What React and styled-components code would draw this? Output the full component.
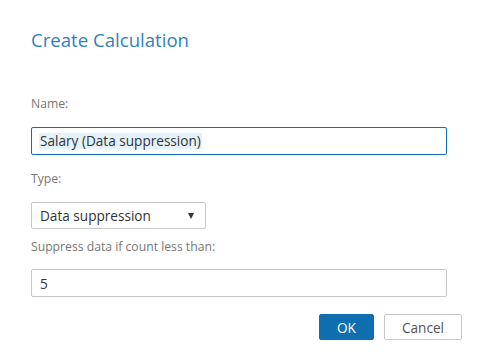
import React from 'react';
import styled, { createGlobalStyle } from 'styled-components';

const GlobalStyle = createGlobalStyle`
  html, body {
    margin: 0;
    padding: 0;
    background: #ffffff;
  }
  body {
    font-family: 'Open Sans', 'Liberation Sans', sans-serif;
  }
`;

const Dialog = styled.div`
  width: 479px;
  height: 358px;
  box-sizing: border-box;
  padding: 28px 0 0 31px;
  display: flex;
  flex-direction: column;
`;

const Title = styled.h1`
  margin: 0;
  font-size: 18.6px;
  line-height: 24px;
  font-weight: 400;
  color: #2f80c2;
`;

const Form = styled.div`
  display: flex;
  flex-direction: column;
  width: 416px;
  margin-top: 44px;
`;

const Label = styled.label`
  font-size: 12.2px;
  line-height: 16px;
  color: #777;
  margin-top: ${p => p.$top || 0}px;
`;

const TextInput = styled.div`
  box-sizing: border-box;
  height: 28px;
  margin-top: ${p => p.$top || 0}px;
  border: 1px solid ${p => (p.$focused ? '#0f6fb4' : '#c8c8c8')};
  border-radius: 2px;
  padding: 0 8px;
  display: flex;
  align-items: center;
  font-size: 13.6px;
  color: #333;
`;

const Selected = styled.span`
  background: #e3f2fb;
  padding: 0 1px;
  margin-left: -1px;
  line-height: 16px;
`;

const Select = styled.div`
  box-sizing: border-box;
  width: 175px;
  height: 27px;
  margin-top: 15px;
  border: 1px solid #c8c8c8;
  border-radius: 2px;
  padding: 0 11px 0 8px;
  display: flex;
  align-items: center;
  justify-content: space-between;
  font-size: 13.6px;
  color: #333;
`;

const Caret = styled.span`
  width: 0;
  height: 0;
  border-left: 3.5px solid transparent;
  border-right: 3.5px solid transparent;
  border-top: 6px solid #333;
`;

const Actions = styled.div`
  display: flex;
  justify-content: flex-end;
  gap: 10px;
  margin-top: 17px;
  padding-right: 17px;
`;

const Button = styled.button`
  box-sizing: border-box;
  height: 26px;
  padding: 0;
  width: ${p => p.$w}px;
  border-radius: 2px;
  font-family: inherit;
  font-size: 13.6px;
  cursor: pointer;
  border: 1px solid ${p => (p.$primary ? '#0e6eb0' : '#c8c8c8')};
  background: ${p => (p.$primary ? '#0e6eb0' : '#fff')};
  color: ${p => (p.$primary ? '#fff' : '#555')};
`;

export default function App() {
  return (
    <>
      <GlobalStyle />
      <Dialog>
        <Title>Create Calculation</Title>
        <Form>
          <Label>Name:</Label>
          <TextInput $focused $top={15}>
            <Selected>Salary (Data suppression)</Selected>
          </TextInput>
          <Label $top={16}>Type:</Label>
          <Select>
            <span>Data suppression</span>
            <Caret />
          </Select>
          <Label $top={10}>Suppress data if count less than:</Label>
          <TextInput $top={14}>5</TextInput>
        </Form>
        <Actions>
          <Button $primary $w={55}>OK</Button>
          <Button $w={78}>Cancel</Button>
        </Actions>
      </Dialog>
    </>
  );
}
